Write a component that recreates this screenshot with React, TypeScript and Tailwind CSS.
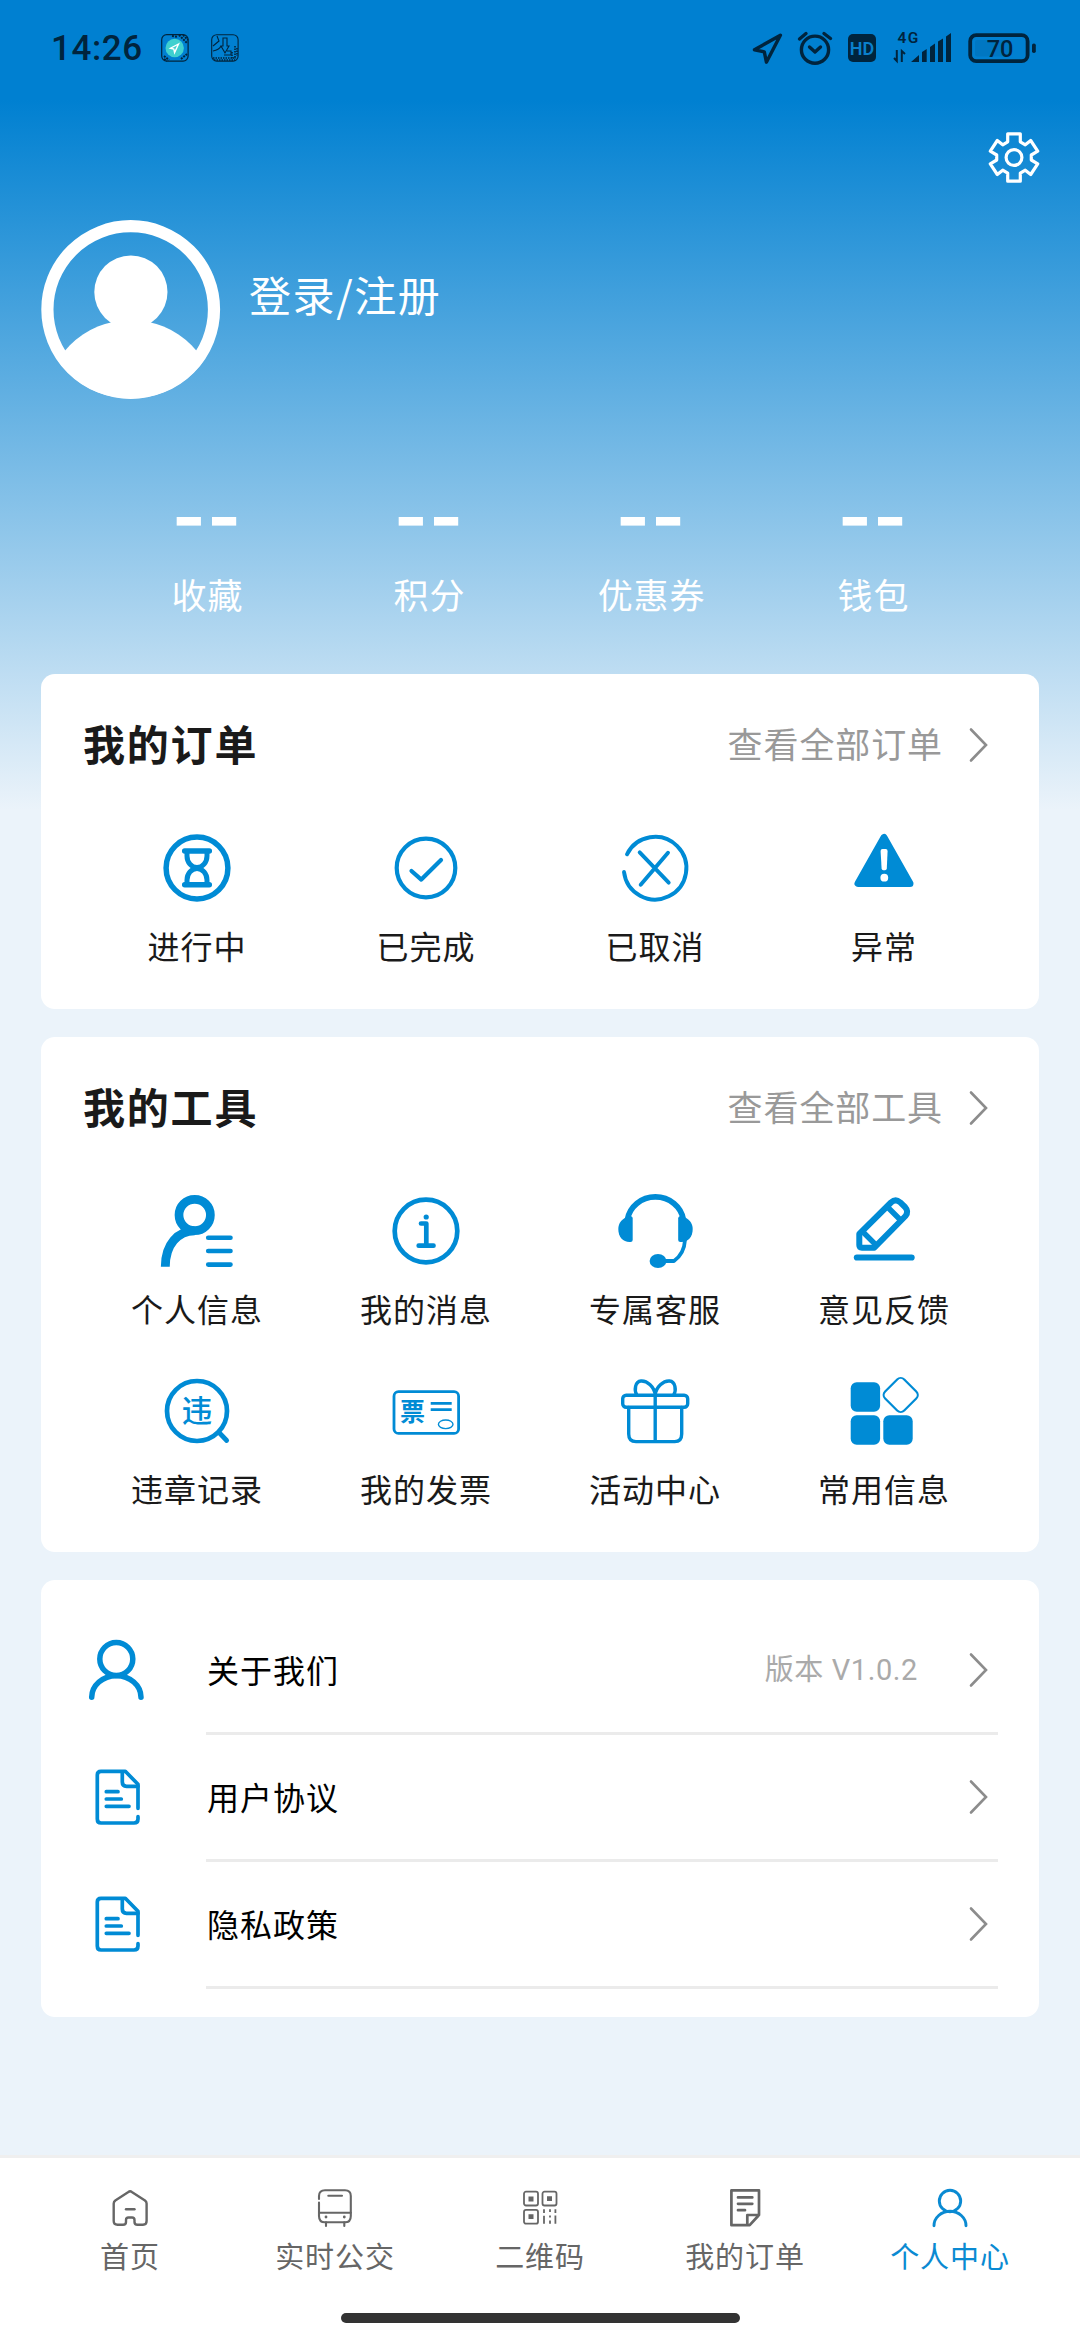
import type { ReactNode } from 'react';

interface Entry {
  label: string;
  icon: ReactNode;
}

interface IconProps {
  children: ReactNode;
  width?: number;
}

const BLUE = '#008bd5';
const INK = '#00243d';

// 80x80 canvas shared by the card icons
const Icon: React.FC<IconProps> = ({ children, width = 4 }) => (
  <svg
    width="80"
    height="80"
    viewBox="0 0 80 80"
    fill="none"
    stroke={BLUE}
    strokeWidth={width}
    strokeLinecap="round"
    strokeLinejoin="round"
    className="shrink-0"
  >
    {children}
  </svg>
);

const TabIcon: React.FC<IconProps> = ({ children, width = 2.4 }) => (
  <svg
    width="48"
    height="48"
    viewBox="0 0 48 48"
    fill="none"
    stroke="currentColor"
    strokeWidth={width}
    strokeLinecap="round"
    strokeLinejoin="round"
  >
    {children}
  </svg>
);

const Chevron = () => (
  <svg width="20" height="36" viewBox="0 0 20 36" fill="none" stroke="#8c8c8c" strokeWidth="2.6" strokeLinecap="round">
    <path d="M2 2.5 17 18 2 33.5" />
  </svg>
);

const DocIcon = () => (
  <Icon width={3.7}>
    <path d="M61 51.3V27.3L48.3 14.3H24Q20.3 14.3 20.3 18V62Q20.3 66 24 66H57Q61 66 61 62V59.7" />
    <path d="M45.3 15V25Q45.3 29.3 49.5 29.3H61" />
    <path d="M29.3 34.7H41M29.3 42H44.3M29.3 49.3H52" />
  </Icon>
);

const stats = ['收藏', '积分', '优惠券', '钱包'];

const orders: Entry[] = [
  {
    label: '进行中',
    icon: (
      <Icon width={5.5}>
        <circle cx="40" cy="40" r="30.9" />
        <path d="M27.7 22.9H52.3M27.7 56.7H52.3" />
        <path strokeWidth="5" d="M30 24V28A10 11.5 0 0 0 50 28V24M30 56V52A10 11.5 0 0 1 50 52V56" />
      </Icon>
    )
  },
  {
    label: '已完成',
    icon: (
      <Icon width={4.2}>
        <circle cx="40" cy="40" r="29.3" />
        <path d="M25.5 43 35.3 51.6 55 32" />
      </Icon>
    )
  },
  {
    label: '已取消',
    icon: (
      <Icon width={3.9}>
        <path d="M12 26.3A31.3 31.3 0 1 1 9 44" />
        <path d="M24.7 24.3 53.7 54.7M53 24.7 25.7 56.7" />
      </Icon>
    )
  },
  {
    label: '异常',
    icon: (
      <Icon width={7}>
        <path d="M40 9.5 14 55.5H66Z" fill={BLUE} />
        <path d="M36.6 23Q36.6 21 38.5 21H41.7Q43.6 21 43.6 23L42.8 40.5Q42.6 42.3 41 42.3H39.4Q37.8 42.3 37.6 40.5Z" fill="white" stroke="none" />
        <circle cx="40.3" cy="49.7" r="3.9" fill="white" stroke="none" />
      </Icon>
    )
  }
];

const tools: Entry[] = [
  {
    label: '个人信息',
    icon: (
      <Icon width={4.6}>
        <circle cx="37.7" cy="24" r="15.7" strokeWidth="8.7" />
        <path d="M8.3 75.7C8.3 53 21 40 37.7 39.7" strokeWidth="8.9" strokeLinecap="butt" />
        <path d="M51.2 46.7H73.5M51.2 60H73.5M51.2 73.6H73.5" />
      </Icon>
    )
  },
  {
    label: '我的消息',
    icon: (
      <Icon width={4.7}>
        <circle cx="40" cy="40" r="31.3" />
        <circle cx="40.2" cy="26" r="2.6" fill={BLUE} stroke="none" />
        <path d="M35 32.5H40.3V54.7M32.7 54.7H47.5" />
      </Icon>
    )
  },
  {
    label: '专属客服',
    icon: (
      <Icon width={5.6}>
        <path d="M12.3 29A28.4 27 0 0 1 68.5 29" />
        <path
          d="M17.7 27.5Q17.7 25 15 25C7 27 3.3 32 3.3 38C3.3 46 8 51 14.5 51H15.5Q17.7 51 17.7 49Z"
          fill={BLUE}
          stroke="none"
        />
        <path
          d="M63.2 27.5Q63.2 25 66 25C74 27 77.7 32 77.7 38C77.7 46 73 51 66.5 51H65.4Q63.2 51 63.2 49Z"
          fill={BLUE}
          stroke="none"
        />
        <path d="M70 49C69.5 58 66 65 59 70H49" strokeWidth="3.8" />
        <ellipse cx="43" cy="70" rx="8.4" ry="7.1" fill={BLUE} stroke="none" />
      </Icon>
    )
  },
  {
    label: '意见反馈',
    icon: (
      <Icon width={6}>
        <path d="M15.3 43 47 11.5Q51.5 7.5 56 11.2L61 16Q65 20.5 61.5 25L30.3 56.7H18Q15.3 56.7 15.3 54Z" />
        <path d="M43 15.5 57 29.5M19 41 31 53" strokeWidth="5.4" strokeLinecap="butt" />
        <path d="M12.9 66.5H67.6" strokeWidth="6.2" />
      </Icon>
    )
  },
  {
    label: '违章记录',
    icon: (
      <Icon width={4.7}>
        <circle cx="40" cy="40" r="30" />
        <path d="M62.5 62 69.7 69.5" />
        <text x="40" y="50.5" fontSize="30.5" fontWeight="500" textAnchor="middle" fill={BLUE} stroke="none">
          违
        </text>
      </Icon>
    )
  },
  {
    label: '我的发票',
    icon: (
      <Icon width={2.8}>
        <rect x="8" y="20.7" width="64.6" height="41.7" rx="4.5" />
        <text x="26.5" y="50" fontSize="25" fontWeight="700" textAnchor="middle" fill={BLUE} stroke="none">
          票
        </text>
        <path d="M44.7 32.4H65.7M44.7 38.6H65.7" strokeLinecap="butt" />
        <ellipse cx="59.7" cy="53.3" rx="7.3" ry="4.3" strokeWidth="1.4" />
      </Icon>
    )
  },
  {
    label: '活动中心',
    icon: (
      <Icon width={3.4}>
        <rect x="7.7" y="24.3" width="65" height="12" rx="3.5" />
        <path d="M13.7 36.5V63Q13.7 70.6 21 70.6H59.7Q66.7 70.6 66.7 63V36.5M40.2 24V70.6" />
        <path d="M40.2 24C39.5 16 32 9.5 26 10C20 10.5 19 19 21.8 24M40.2 24C41 16 48.5 9.5 54.5 10C60.5 10.5 61.5 19 58.7 24" />
      </Icon>
    )
  },
  {
    label: '常用信息',
    icon: (
      <Icon width={2.2}>
        <g fill={BLUE} stroke="none">
          <rect x="6.7" y="11.3" width="29.4" height="29.4" rx="6" />
          <rect x="6.7" y="44.3" width="29.4" height="29.4" rx="6" />
          <rect x="39.3" y="44.3" width="29.4" height="29.4" rx="6" />
        </g>
        <rect x="43.2" y="10.5" width="27" height="27" rx="5" transform="rotate(45 56.7 24)" />
      </Icon>
    )
  }
];

const links = [
  {
    label: '关于我们',
    note: '版本 V1.0.2',
    icon: (
      <Icon width={5.5}>
        <circle cx="39.3" cy="29" r="16.5" />
        <path d="M14.7 67.3A24.65 21.6 0 0 1 64 67.3" />
      </Icon>
    )
  },
  { label: '用户协议', note: '', icon: <DocIcon /> },
  { label: '隐私政策', note: '', icon: <DocIcon /> }
];

const tabs: Entry[] = [
  {
    label: '首页',
    icon: (
      <TabIcon>
        <path d="M22.4 8Q24.1 6.6 25.8 8L39 16.5Q40.6 17.7 40.6 19.5V37Q40.6 40.7 37 40.7H31.5Q28.5 40.7 28.5 38V36Q28.5 33.5 26 33.5H22.5Q20 33.5 20 36V38Q20 40.7 17 40.7H11.5Q7.7 40.7 7.7 37V19.5Q7.7 17.7 9.3 16.5Z" />
        <path d="M20 25.3H28.5" />
      </TabIcon>
    )
  },
  {
    label: '实时公交',
    icon: (
      <TabIcon width={2.1}>
        <path d="M8 15V12Q8 6.3 14 6.3H34Q39.8 6.3 39.8 12V32Q39.8 38.3 34 38.3H14Q8 38.3 8 32V18.5" />
        <path d="M8 28.7H39.8M17.3 11.7H31M15 38.3V42M33.3 38.3V42" />
        <path d="M15 33V33.1M33.3 33V33.1" strokeWidth="2.8" />
      </TabIcon>
    )
  },
  {
    label: '二维码',
    icon: (
      <TabIcon width={1.8}>
        <rect x="8" y="7.7" width="14" height="13.8" rx="2" />
        <rect x="26.5" y="7.7" width="14" height="13.8" rx="2" />
        <rect x="8" y="25.9" width="14" height="13.8" rx="2" />
        <path d="M12.5 12.6h5v4.8h-5zM31 12.3h5v4.8h-5zM12.5 30.3h5v4.8h-5z" fill="currentColor" stroke="none" />
        <path
          d="M28 25.3V29M28 31.8V39.7M34 25.3V28M34 31.5V33.5M34 36.5V39.7M39.4 25.3V29M39.4 31.5V39.7"
          strokeLinecap="butt"
        />
      </TabIcon>
    )
  },
  {
    label: '我的订单',
    icon: (
      <TabIcon width={2.7}>
        <path d="M38 31V6.4H10.4V41.2H28.7L38 31H26.3V41" />
        <path d="M17 13.4H31.3M17 19.8H31.3M17 26.2H24" />
      </TabIcon>
    )
  },
  {
    label: '个人中心',
    icon: (
      <TabIcon width={2.9}>
        <circle cx="24" cy="17" r="10.7" />
        <path d="M8 41.7A16 14.4 0 0 1 40 41.7" />
      </TabIcon>
    )
  }
];

const StatusBar = () => (
  <div className="flex h-24 items-center justify-between pr-[44px] pl-[51px] text-[#00243d]">
    <div className="flex items-center">
      <span className="w-[110px] pt-px font-[Roboto] text-[35px] leading-none font-medium tracking-[0.6px]">14:26</span>
      <svg width="28" height="28" viewBox="0 0 28 28" fill="none" stroke={INK} strokeWidth="1.2">
        <rect x="0.7" y="0.7" width="26.4" height="26.4" rx="5" />
        <path d="M3 22 8 26M3 25 6 27M11 2 17 3M18 1 26 9M22 1 27 6M20 25 26 20" strokeDasharray="2 1" strokeWidth="2" />
        <circle cx="13.7" cy="14" r="9.2" fill="#3fd0cf" stroke="none" />
        <path d="M17.5 10 9.5 14.2 12.8 15 13.6 18.5Z" stroke="white" strokeWidth="1.4" />
      </svg>
      <svg width="28" height="28" viewBox="0 0 28 28" fill="none" stroke={INK} strokeWidth="1.1" className="ml-[22px]">
        <rect x="0.7" y="0.7" width="26.4" height="26.4" rx="5" />
        <path d="M12 4V12H10L14 19 18 12H16V4ZM16 17H20V21H13M2 12 8 7 6 2M2 17Q8 16 10 12" />
        <path d="M2 24H25M3 26H24M24 12V24M26 14V22M21 18V25" strokeDasharray="1.5 1" strokeWidth="1.6" />
      </svg>
    </div>
    <div className="flex items-center">
      <svg width="34" height="34" viewBox="0 0 34 34" fill="none" stroke={INK} strokeWidth="3.4" strokeLinejoin="round">
        <path d="M30.4 4.2 4.5 18.8 14.3 20.8 16.4 31.2Z" />
      </svg>
      <svg
        width="36"
        height="38"
        viewBox="0 0 36 38"
        fill="none"
        stroke={INK}
        strokeWidth="3.4"
        strokeLinecap="round"
        strokeLinejoin="round"
        className="ml-[13px]"
      >
        <circle cx="18" cy="20.7" r="13.6" />
        <path d="M12.5 18 18 23 23.5 18M2.5 10 9 4.5M27 4.5 33.5 9.5" />
      </svg>
      <span className="ml-[15px] flex h-7 w-7 items-center justify-center rounded-[5px] bg-[#00243d] font-[Roboto] text-[18px] font-semibold text-[#0a80cc]">
        HD
      </span>
      <svg width="59" height="36" viewBox="0 0 59 36" fill={INK} className="ml-[17px]">
        <text x="4.5" y="12.5" fontSize="15.5" fontWeight="600" fontFamily="Roboto" letterSpacing="1.4">
          4G
        </text>
        <path d="M3.8 20V31L1 28M8.8 32V21L12 24" fill="none" stroke={INK} strokeWidth="2" />
        <path d="M18 32 26 25V32ZM29 32V22L33.7 19V32ZM37 32V17L42 13.5V32ZM45 32V11.5L50 8.5V32ZM53 32V6.5L58 3V32Z" />
      </svg>
      <svg width="69" height="32" viewBox="0 0 69 32" className="ml-[15px]">
        <rect x="3.2" y="3.2" width="57.4" height="26" rx="6" fill="none" stroke={INK} strokeWidth="3.8" />
        <rect x="8" y="8" width="34" height="16.4" rx="2" fill="#0077c2" />
        <rect x="65" y="11.5" width="3.8" height="9.6" rx="1.8" fill={INK} />
        <text x="33" y="24.6" fontSize="23.5" fontWeight="500" fontFamily="Roboto" textAnchor="middle" fill={INK}>
          70
        </text>
      </svg>
    </div>
  </div>
);

const SectionCard: React.FC<{ title: string; more: string; entries: Entry[] }> = ({ title, more, entries }) => (
  <section className="rounded-[14px] bg-white px-[41px] pt-[39px] pb-[44px]">
    <div className="mb-[55px] flex h-[60px] items-center justify-between">
      <h2 className="pl-px text-[42px] leading-[60px] font-bold tracking-[1.8px] text-[#1a1a1a]">{title}</h2>
      <button className="flex items-center gap-[26px] pr-[9px] text-[35px] leading-[60px] tracking-[0.9px] text-[#999]">
        {more}
        <span className="pt-[3px]">
          <Chevron />
        </span>
      </button>
    </div>
    <div className="grid grid-cols-4 gap-y-[43px]">
      {entries.map((entry) => (
        <button key={entry.label} className="flex flex-col items-center gap-[17px]">
          {entry.icon}
          <span className="pl-px text-[32px] leading-10 tracking-[1px] text-[#1a1a1a]">{entry.label}</span>
        </button>
      ))}
    </div>
  </section>
);

const App = () => {
  return (
    <div className="flex h-[2340px] w-[1080px] flex-col overflow-hidden bg-[linear-gradient(#0080d1_100px,#ebf3fa_810px)] font-['Noto_Sans_CJK_SC',sans-serif]">
      <StatusBar />

      <div className="flex h-[124px] items-center justify-end pr-[38px]">
        <svg width="56" height="56" viewBox="-28 -28 56 56" fill="none" stroke="white" strokeWidth="3.2" strokeLinejoin="round">
          <circle r="7.9" cy="-0.5" />
          <path
            transform="translate(0 -0.5)"
            d="M-6.3-23.7H6.3V-15.7L11.3-12.7 16.7-17 23.7-6.3 17.3-2.5V2.5L23.7 6.3 16.7 17 11.3 12.7 6.3 15.7V23.7H-6.3V15.7L-11.3 12.7-16.7 17-23.7 6.3-17.3 2.5V-2.5L-23.7-6.3-16.7-17-11.3-12.7-6.3-15.7Z"
          />
        </svg>
      </div>

      {/* Avatar + login */}
      <div className="flex items-start pl-[41px]">
        <svg width="180" height="180" viewBox="0 0 180 180" fill="white">
          <defs>
            <clipPath id="avatar">
              <circle cx="89.7" cy="89.5" r="89" />
            </clipPath>
          </defs>
          <circle cx="89.7" cy="89.5" r="83.3" fill="none" stroke="white" strokeWidth="12.2" />
          <circle cx="89.9" cy="72" r="36.6" />
          <circle cx="89.7" cy="186" r="86" clipPath="url(#avatar)" />
        </svg>
        <button className="mt-[44px] ml-[28px] text-[42px] leading-[60px] tracking-[1.6px] text-white">登录/注册</button>
      </div>

      {/* Account counters */}
      <div className="mt-[87px] grid h-[187px] grid-cols-4 px-[96px] text-center text-white">
        {stats.map((label) => (
          <div key={label}>
            <p className="font-[Inter] text-[73px] leading-[60px] font-bold tracking-[1.2px]">--</p>
            <p className="mt-[24px] pl-px text-[35px] leading-[46px] tracking-[0.9px]">{label}</p>
          </div>
        ))}
      </div>

      <main className="flex flex-col gap-7 px-[41px]">
        <SectionCard title="我的订单" more="查看全部订单" entries={orders} />
        <SectionCard title="我的工具" more="查看全部工具" entries={tools} />

        <section className="rounded-[14px] bg-white py-7 pr-[41px] pl-[36px]">
          {links.map((link) => (
            <div key={link.label} className="flex h-[127px]">
              <div className="flex h-[124px] items-center">{link.icon}</div>
              <div className="ml-[49px] flex h-full flex-1 items-center border-b-[3px] border-[#ebebeb]">
                <span className="pb-[3px] pl-px text-[32px] tracking-[1px] text-black">{link.label}</span>
                <span className="mr-[51px] ml-auto pt-[2px] font-[Roboto,'Noto_Sans_CJK_SC'] text-[29px] tracking-[0.6px] text-[#aaa]">
                  {link.note}
                </span>
                <span className="mr-[9px]">
                  <Chevron />
                </span>
              </div>
            </div>
          ))}
        </section>
      </main>

      {/* Bottom tabs */}
      <nav className="mt-auto flex h-[185px] flex-col border-t-[3px] border-[#efefef] bg-white">
        <div className="flex px-[27.5px] pt-[26px]">
          {tabs.map((tab) => (
            <button
              key={tab.label}
              className={`flex flex-1 flex-col items-center gap-[5px] ${
                tab.label === '个人中心' ? 'text-[#0a8ad2]' : 'text-[#666]'
              }`}
            >
              {tab.icon}
              <span className="text-[29px] leading-9 tracking-[0.9px]">{tab.label}</span>
            </button>
          ))}
        </div>
        <div className="mx-auto mt-[40px] h-2.5 w-[399px] rounded-full bg-[#333]" />
      </nav>
    </div>
  );
};

export default App;
